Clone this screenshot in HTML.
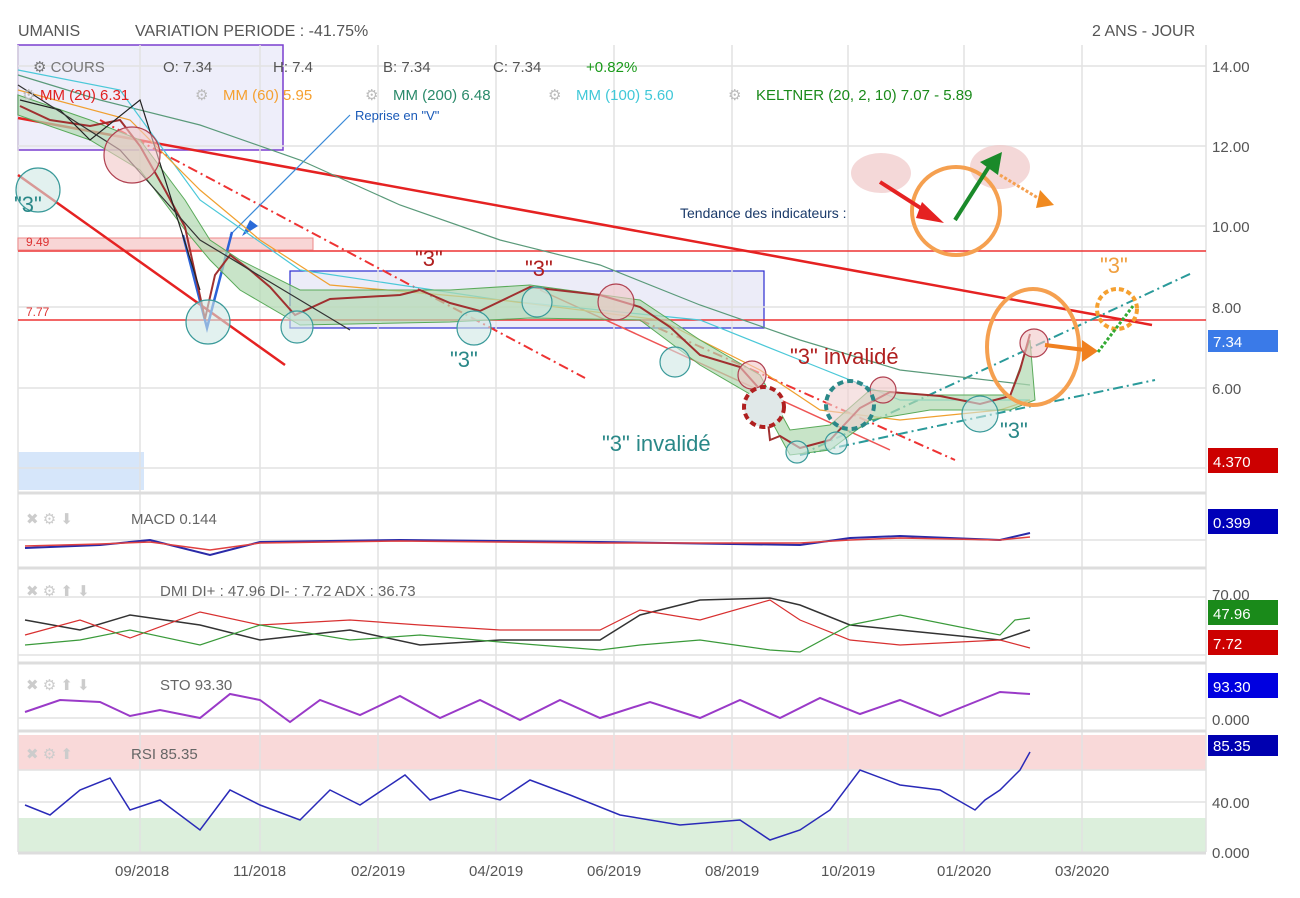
<!DOCTYPE html>
<html><head><meta charset="utf-8"><style>
body{margin:0;background:#fff;width:1300px;height:898px;overflow:hidden;font-family:"Liberation Sans",sans-serif}
svg{display:block}
text{font-family:"Liberation Sans",sans-serif}
</style></head><body>
<svg width="1300" height="898" viewBox="0 0 1300 898">
<!-- header -->
<text x="18" y="36" font-size="16" fill="#555">UMANIS</text>
<text x="135" y="36" font-size="16" fill="#555">VARIATION PERIODE : -41.75%</text>
<text x="1092" y="36" font-size="16" fill="#555">2 ANS - JOUR</text>

<!-- panel backgrounds -->
<rect x="18" y="735" width="1188" height="35" fill="#f9d9d9"/>
<rect x="18" y="818" width="1188" height="34" fill="#dcefdc"/>
<rect x="18" y="45" width="265" height="105" fill="#eeeefa" stroke="#7a3fcf" stroke-width="1.5"/>
<rect x="18" y="452" width="126" height="38" fill="#d6e6fa"/>
<rect x="290" y="271" width="474" height="57" fill="#ececf8" stroke="#2b2bd0" stroke-width="1.2"/>

<!-- grid -->
<g stroke="#e2e2e2" stroke-width="1.5">
<line x1="140" y1="45" x2="140" y2="852"/><line x1="260" y1="45" x2="260" y2="852"/>
<line x1="378" y1="45" x2="378" y2="852"/><line x1="496" y1="45" x2="496" y2="852"/>
<line x1="614" y1="45" x2="614" y2="852"/><line x1="732" y1="45" x2="732" y2="852"/>
<line x1="848" y1="45" x2="848" y2="852"/><line x1="964" y1="45" x2="964" y2="852"/>
<line x1="1082" y1="45" x2="1082" y2="852"/><line x1="1206" y1="45" x2="1206" y2="852"/>
<line x1="18" y1="45" x2="18" y2="852"/>
<line x1="18" y1="66" x2="1206" y2="66"/><line x1="18" y1="146" x2="1206" y2="146"/>
<line x1="18" y1="226" x2="1206" y2="226"/><line x1="18" y1="307" x2="1206" y2="307"/>
<line x1="18" y1="388" x2="1206" y2="388"/><line x1="18" y1="468" x2="1206" y2="468"/>
<line x1="18" y1="540" x2="1206" y2="540"/><line x1="18" y1="597" x2="1206" y2="597"/>
<line x1="18" y1="655" x2="1206" y2="655"/><line x1="18" y1="718" x2="1206" y2="718"/>
<line x1="18" y1="770" x2="1206" y2="770"/><line x1="18" y1="802" x2="1206" y2="802"/>
</g>
<g stroke="#ddd" stroke-width="3">
<line x1="18" y1="493" x2="1206" y2="493"/><line x1="18" y1="568" x2="1206" y2="568"/>
<line x1="18" y1="663" x2="1206" y2="663"/><line x1="18" y1="731" x2="1206" y2="731"/>
<line x1="18" y1="853" x2="1206" y2="853"/>
</g>

<!-- horizontal support lines -->
<line x1="18" y1="251" x2="1206" y2="251" stroke="#e33" stroke-width="1.5"/>
<line x1="18" y1="320" x2="1206" y2="320" stroke="#e33" stroke-width="1.5"/>
<rect x="18" y="238" width="295" height="12" fill="#f8d6d6" stroke="#e88"/>
<text x="26" y="246" font-size="12" fill="#d33">9.49</text>
<text x="26" y="316" font-size="12" fill="#d33">7.77</text>
<!-- big trendline -->
<line x1="18" y1="118" x2="1152" y2="325" stroke="#e52222" stroke-width="2.5"/>
<line x1="18" y1="175" x2="285" y2="365" stroke="#e52222" stroke-width="2.5"/>
<line x1="100" y1="120" x2="585" y2="378" stroke="#e33" stroke-width="2" stroke-dasharray="10,4,2,4"/>
<line x1="540" y1="290" x2="890" y2="450" stroke="#e55" stroke-width="1.5"/>
<line x1="640" y1="320" x2="955" y2="460" stroke="#e33" stroke-width="2" stroke-dasharray="10,4,2,4"/>
<line x1="800" y1="455" x2="1192" y2="273" stroke="#2a9a9a" stroke-width="2" stroke-dasharray="10,4,2,4"/>
<line x1="800" y1="455" x2="1155" y2="380" stroke="#2a9a9a" stroke-width="2" stroke-dasharray="10,4,2,4"/>
<line x1="230" y1="235" x2="350" y2="115" stroke="#3a8ad8" stroke-width="1.2"/>
<polygon points="242,236 258,226 250,220" fill="#2a6ad8"/>
<polyline points="183,235 207,328 232,232" fill="none" stroke="#2b62d8" stroke-width="2.5"/>

<!-- MAs -->
<polyline points="18,75 100,100 200,125 300,160 400,205 500,240 600,265 700,305 800,340 900,370 1030,385" fill="none" stroke="#5a9a7a" stroke-width="1.2"/>
<polyline points="18,70 120,90 200,200 300,270 500,300 700,320 800,360 900,400 1030,400" fill="none" stroke="#4bc8d8" stroke-width="1.2"/>
<polyline points="18,90 130,120 200,190 260,240 330,285 500,300 660,320 760,370 820,410 900,420 1000,410 1030,400" fill="none" stroke="#f0a030" stroke-width="1.2"/>
<polygon points="18,95 90,120 140,140 185,200 210,240 240,260 300,290 450,290 530,285 640,300 700,340 760,375 790,430 830,425 870,390 930,395 1010,395 1030,340 1035,400 1010,410 930,410 870,420 830,450 790,455 760,400 700,365 640,320 530,318 450,322 300,325 240,290 210,260 185,230 140,170 90,140 18,115" fill="#b0d8b0" fill-opacity="0.7" stroke="#5aaa5a"/>
<!-- price -->
<polyline points="20,106 50,120 90,126 120,120 140,146 165,190 185,227 205,319 215,275 230,255 250,270 270,287 295,315 330,299 400,295 420,290 450,303 480,311 530,287 600,295 640,307 670,327 700,355 740,367 765,395 770,440 780,436 800,448 830,440 860,408 890,392 940,396 980,404 1010,396 1020,370 1030,334" fill="none" stroke="#a03030" stroke-width="2"/>
<polyline points="20,100 60,110 90,140 140,100 200,290" fill="none" stroke="#222" stroke-width="1.2"/>
<polyline points="18,85 120,150 200,240 350,330" fill="none" stroke="#333" stroke-width="1.2"/>

<!-- circles -->
<g fill="#cfe7e4" fill-opacity="0.6" stroke="#3a9a9a" stroke-width="1.2">
<circle cx="38" cy="190" r="22"/><circle cx="208" cy="322" r="22"/><circle cx="297" cy="327" r="16"/>
<circle cx="474" cy="328" r="17"/><circle cx="537" cy="302" r="15"/><circle cx="675" cy="362" r="15"/>
<circle cx="797" cy="452" r="11"/><circle cx="836" cy="443" r="11"/><circle cx="980" cy="414" r="18"/>
</g>
<g fill="#f2c7c7" fill-opacity="0.6" stroke="#b04050" stroke-width="1.2">
<circle cx="132" cy="155" r="28"/><circle cx="616" cy="302" r="18"/><circle cx="752" cy="375" r="14"/>
<circle cx="883" cy="390" r="13"/><circle cx="1034" cy="343" r="14"/>
</g>
<circle cx="764" cy="407" r="20" fill="#e0e8e8" stroke="#b02020" stroke-width="4" stroke-dasharray="6,4"/>
<circle cx="850" cy="405" r="24" fill="#f0d0d0" fill-opacity="0.6" stroke="#2a8888" stroke-width="4" stroke-dasharray="6,4"/>
<ellipse cx="1033" cy="347" rx="46" ry="58" fill="none" stroke="#f5a050" stroke-width="4"/>
<circle cx="1117" cy="309" r="20" fill="none" stroke="#f5a030" stroke-width="4" stroke-dasharray="5,3"/>
<line x1="1045" y1="345" x2="1085" y2="350" stroke="#f08020" stroke-width="4"/>
<polygon points="1082,340 1098,351 1082,362" fill="#f08020"/>
<line x1="1098" y1="352" x2="1133" y2="306" stroke="#33aa33" stroke-width="3" stroke-dasharray="3,2"/>

<!-- tendance -->
<ellipse cx="881" cy="173" rx="30" ry="20" fill="#f0c8c8" fill-opacity="0.7"/>
<ellipse cx="1000" cy="167" rx="30" ry="22" fill="#f0c8c8" fill-opacity="0.7"/>
<circle cx="956" cy="211" r="44" fill="none" stroke="#f5a050" stroke-width="4"/>
<line x1="880" y1="182" x2="930" y2="214" stroke="#e52222" stroke-width="4"/>
<polygon points="922,202 944,223 916,218" fill="#e52222"/>
<line x1="955" y1="220" x2="990" y2="165" stroke="#1a8a2a" stroke-width="4"/>
<polygon points="980,162 1002,152 998,175" fill="#1a8a2a"/>
<line x1="1000" y1="175" x2="1038" y2="198" stroke="#f5a050" stroke-width="3" stroke-dasharray="3,2"/>
<polygon points="1040,190 1054,205 1036,208" fill="#f08a20"/>
<text x="680" y="218" font-size="14" fill="#1a3a6a">Tendance des indicateurs :</text>
<text x="355" y="120" font-size="13" fill="#1a5ab8">Reprise en "V"</text>

<!-- labels 3 -->
<g font-size="22">
<text x="14" y="212" fill="#2a8888">"3"</text>
<text x="415" y="266" fill="#b02020">"3"</text>
<text x="525" y="276" fill="#b02020">"3"</text>
<text x="450" y="367" fill="#2a8888">"3"</text>
<text x="1100" y="273" fill="#f0a040">"3"</text>
<text x="1000" y="438" fill="#2a8888">"3"</text>
<text x="790" y="364" fill="#b02020">"3" invalidé</text>
<text x="602" y="451" fill="#2a8888">"3" invalidé</text>
</g>

<!-- legend -->
<g font-size="15">
<text x="33" y="72" fill="#777">⚙ COURS</text>
<text x="163" y="72" fill="#555">O: 7.34</text>
<text x="273" y="72" fill="#555">H: 7.4</text>
<text x="383" y="72" fill="#555">B: 7.34</text>
<text x="493" y="72" fill="#555">C: 7.34</text>
<text x="586" y="72" fill="#1a9a1a">+0.82%</text>
<text x="22" y="100" fill="#bbb">⚙</text><text x="40" y="100" fill="#e02020">MM (20) 6.31</text>
<text x="195" y="100" fill="#bbb">⚙</text><text x="223" y="100" fill="#f5a030">MM (60) 5.95</text>
<text x="365" y="100" fill="#bbb">⚙</text><text x="393" y="100" fill="#2a8a6a">MM (200) 6.48</text>
<text x="548" y="100" fill="#bbb">⚙</text><text x="576" y="100" fill="#40c8d8">MM (100) 5.60</text>
<text x="728" y="100" fill="#bbb">⚙</text><text x="756" y="100" fill="#1a8a1a">KELTNER (20, 2, 10) 7.07 - 5.89</text>
</g>

<!-- y axis main -->
<g font-size="15" fill="#555">
<text x="1212" y="72">14.00</text><text x="1212" y="152">12.00</text><text x="1212" y="232">10.00</text>
<text x="1212" y="313">8.00</text><text x="1212" y="394">6.00</text>
<text x="1212" y="600">70.00</text><text x="1212" y="725">0.000</text>
<text x="1212" y="808">40.00</text><text x="1212" y="858">0.000</text>
</g>
<g font-size="15" fill="#fff">
<rect x="1208" y="330" width="70" height="22" fill="#3a7ae8"/><text x="1213" y="347">7.34</text>
<rect x="1208" y="448" width="70" height="25" fill="#c00"/><text x="1213" y="467">4.370</text>
<rect x="1208" y="509" width="70" height="25" fill="#0000b8"/><text x="1213" y="528">0.399</text>
<rect x="1208" y="600" width="70" height="25" fill="#1a8a1a"/><text x="1213" y="619">47.96</text>
<rect x="1208" y="630" width="70" height="25" fill="#c00"/><text x="1213" y="649">7.72</text>
<rect x="1208" y="673" width="70" height="25" fill="#0000e0"/><text x="1213" y="692">93.30</text>
<rect x="1208" y="735" width="70" height="21" fill="#0000b0"/><text x="1213" y="751">85.35</text>
</g>

<!-- indicator labels -->
<g font-size="15" fill="#666">
<text x="26" y="524" fill="#ccc">✖ ⚙ ⬇</text><text x="131" y="524">MACD 0.144</text>
<text x="26" y="596" fill="#ccc">✖ ⚙ ⬆ ⬇</text><text x="160" y="596">DMI DI+ : 47.96 DI- : 7.72 ADX : 36.73</text>
<text x="26" y="690" fill="#ccc">✖ ⚙ ⬆ ⬇</text><text x="160" y="690">STO 93.30</text>
<text x="26" y="759" fill="#ccc">✖ ⚙ ⬆</text><text x="131" y="759">RSI 85.35</text>
</g>

<!-- MACD -->
<polyline points="25,548 100,545 150,540 210,555 260,542 400,540 600,542 800,545 850,538 900,536 1000,540 1030,533" fill="none" stroke="#2a2aa8" stroke-width="2"/>
<polyline points="25,546 100,544 150,542 210,550 260,543 400,541 600,543 800,543 850,540 900,538 1000,540 1030,537" fill="none" stroke="#e04040" stroke-width="1.5"/>
<!-- DMI -->
<polyline points="25,620 80,630 130,615 200,625 260,640 350,630 420,645 500,640 600,640 640,615 700,600 770,598 800,605 850,625 900,630 1000,640 1030,630" fill="none" stroke="#333" stroke-width="1.5"/>
<polyline points="25,635 80,620 130,638 200,612 260,625 350,620 420,625 500,630 600,630 640,610 700,620 770,600 800,620 850,640 900,645 1000,640 1030,648" fill="none" stroke="#d83030" stroke-width="1.2"/>
<polyline points="25,645 80,640 130,630 200,645 260,625 350,640 420,635 500,642 600,650 640,645 700,640 770,650 800,652 850,625 900,615 1000,635 1015,620 1030,618" fill="none" stroke="#3a9a3a" stroke-width="1.2"/>
<!-- STO -->
<polyline points="25,712 60,700 100,702 130,716 160,710 200,718 230,694 260,700 290,722 320,700 360,715 400,696 440,718 480,700 520,720 560,700 600,718 650,702 700,718 740,700 780,718 820,698 860,714 900,700 940,716 980,700 1000,692 1030,694" fill="none" stroke="#9a3ac8" stroke-width="2"/>
<!-- RSI -->
<polyline points="25,805 50,815 80,790 110,778 130,810 160,800 200,830 230,790 260,805 300,820 330,790 360,805 405,775 430,800 460,790 500,800 530,780 570,795 620,815 680,825 740,820 770,840 800,830 830,810 860,770 900,785 940,790 975,810 985,800 1000,790 1020,770 1030,752" fill="none" stroke="#2a2ab8" stroke-width="1.5"/>

<!-- x axis -->
<g font-size="15" fill="#555">
<text x="115" y="876">09/2018</text><text x="233" y="876">11/2018</text><text x="351" y="876">02/2019</text>
<text x="469" y="876">04/2019</text><text x="587" y="876">06/2019</text><text x="705" y="876">08/2019</text>
<text x="821" y="876">10/2019</text><text x="937" y="876">01/2020</text><text x="1055" y="876">03/2020</text>
</g>
</svg>
</body></html>
